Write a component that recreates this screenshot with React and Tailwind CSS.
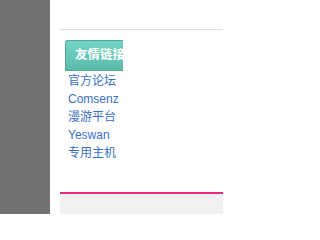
const links = ['官方论坛', 'Comsenz', '漫游平台', 'Yeswan', '专用主机']

export default function App() {
  return (
    <div className="flex h-[214px] w-[223px] overflow-hidden bg-white font-['Liberation_Sans','Noto_Sans_CJK_SC',sans-serif]">
      <div className="w-[50px] shrink-0 bg-[#737373]" />
      <div className="flex flex-1 flex-col pl-[10px]">
        <div className="h-[30px] border-b border-[#dddddd]" />
        <div className="h-[162px] pt-[10px] pl-[5px]">
          <div className="h-[31px] w-[58px] overflow-hidden rounded-tl-[3px] border-b border-l border-t border-[#55a898] bg-gradient-to-b from-[#72d6c6] to-[#5cbaa9]">
            <span className="block whitespace-nowrap pl-[9px] text-[12.5px] font-bold leading-[29px] text-white">
              友情链接
            </span>
          </div>
          <ul className="pt-[1px] pl-[3px]">
            {links.map((l) => (
              <li key={l} className="text-[12px] leading-[18px] text-[#3a6fc6]">
                {l}
              </li>
            ))}
          </ul>
        </div>
        <div className="h-[2px] bg-[#ec2a7a]" />
        <div className="flex-1 bg-[#f1f1f1]" />
      </div>
    </div>
  )
}
